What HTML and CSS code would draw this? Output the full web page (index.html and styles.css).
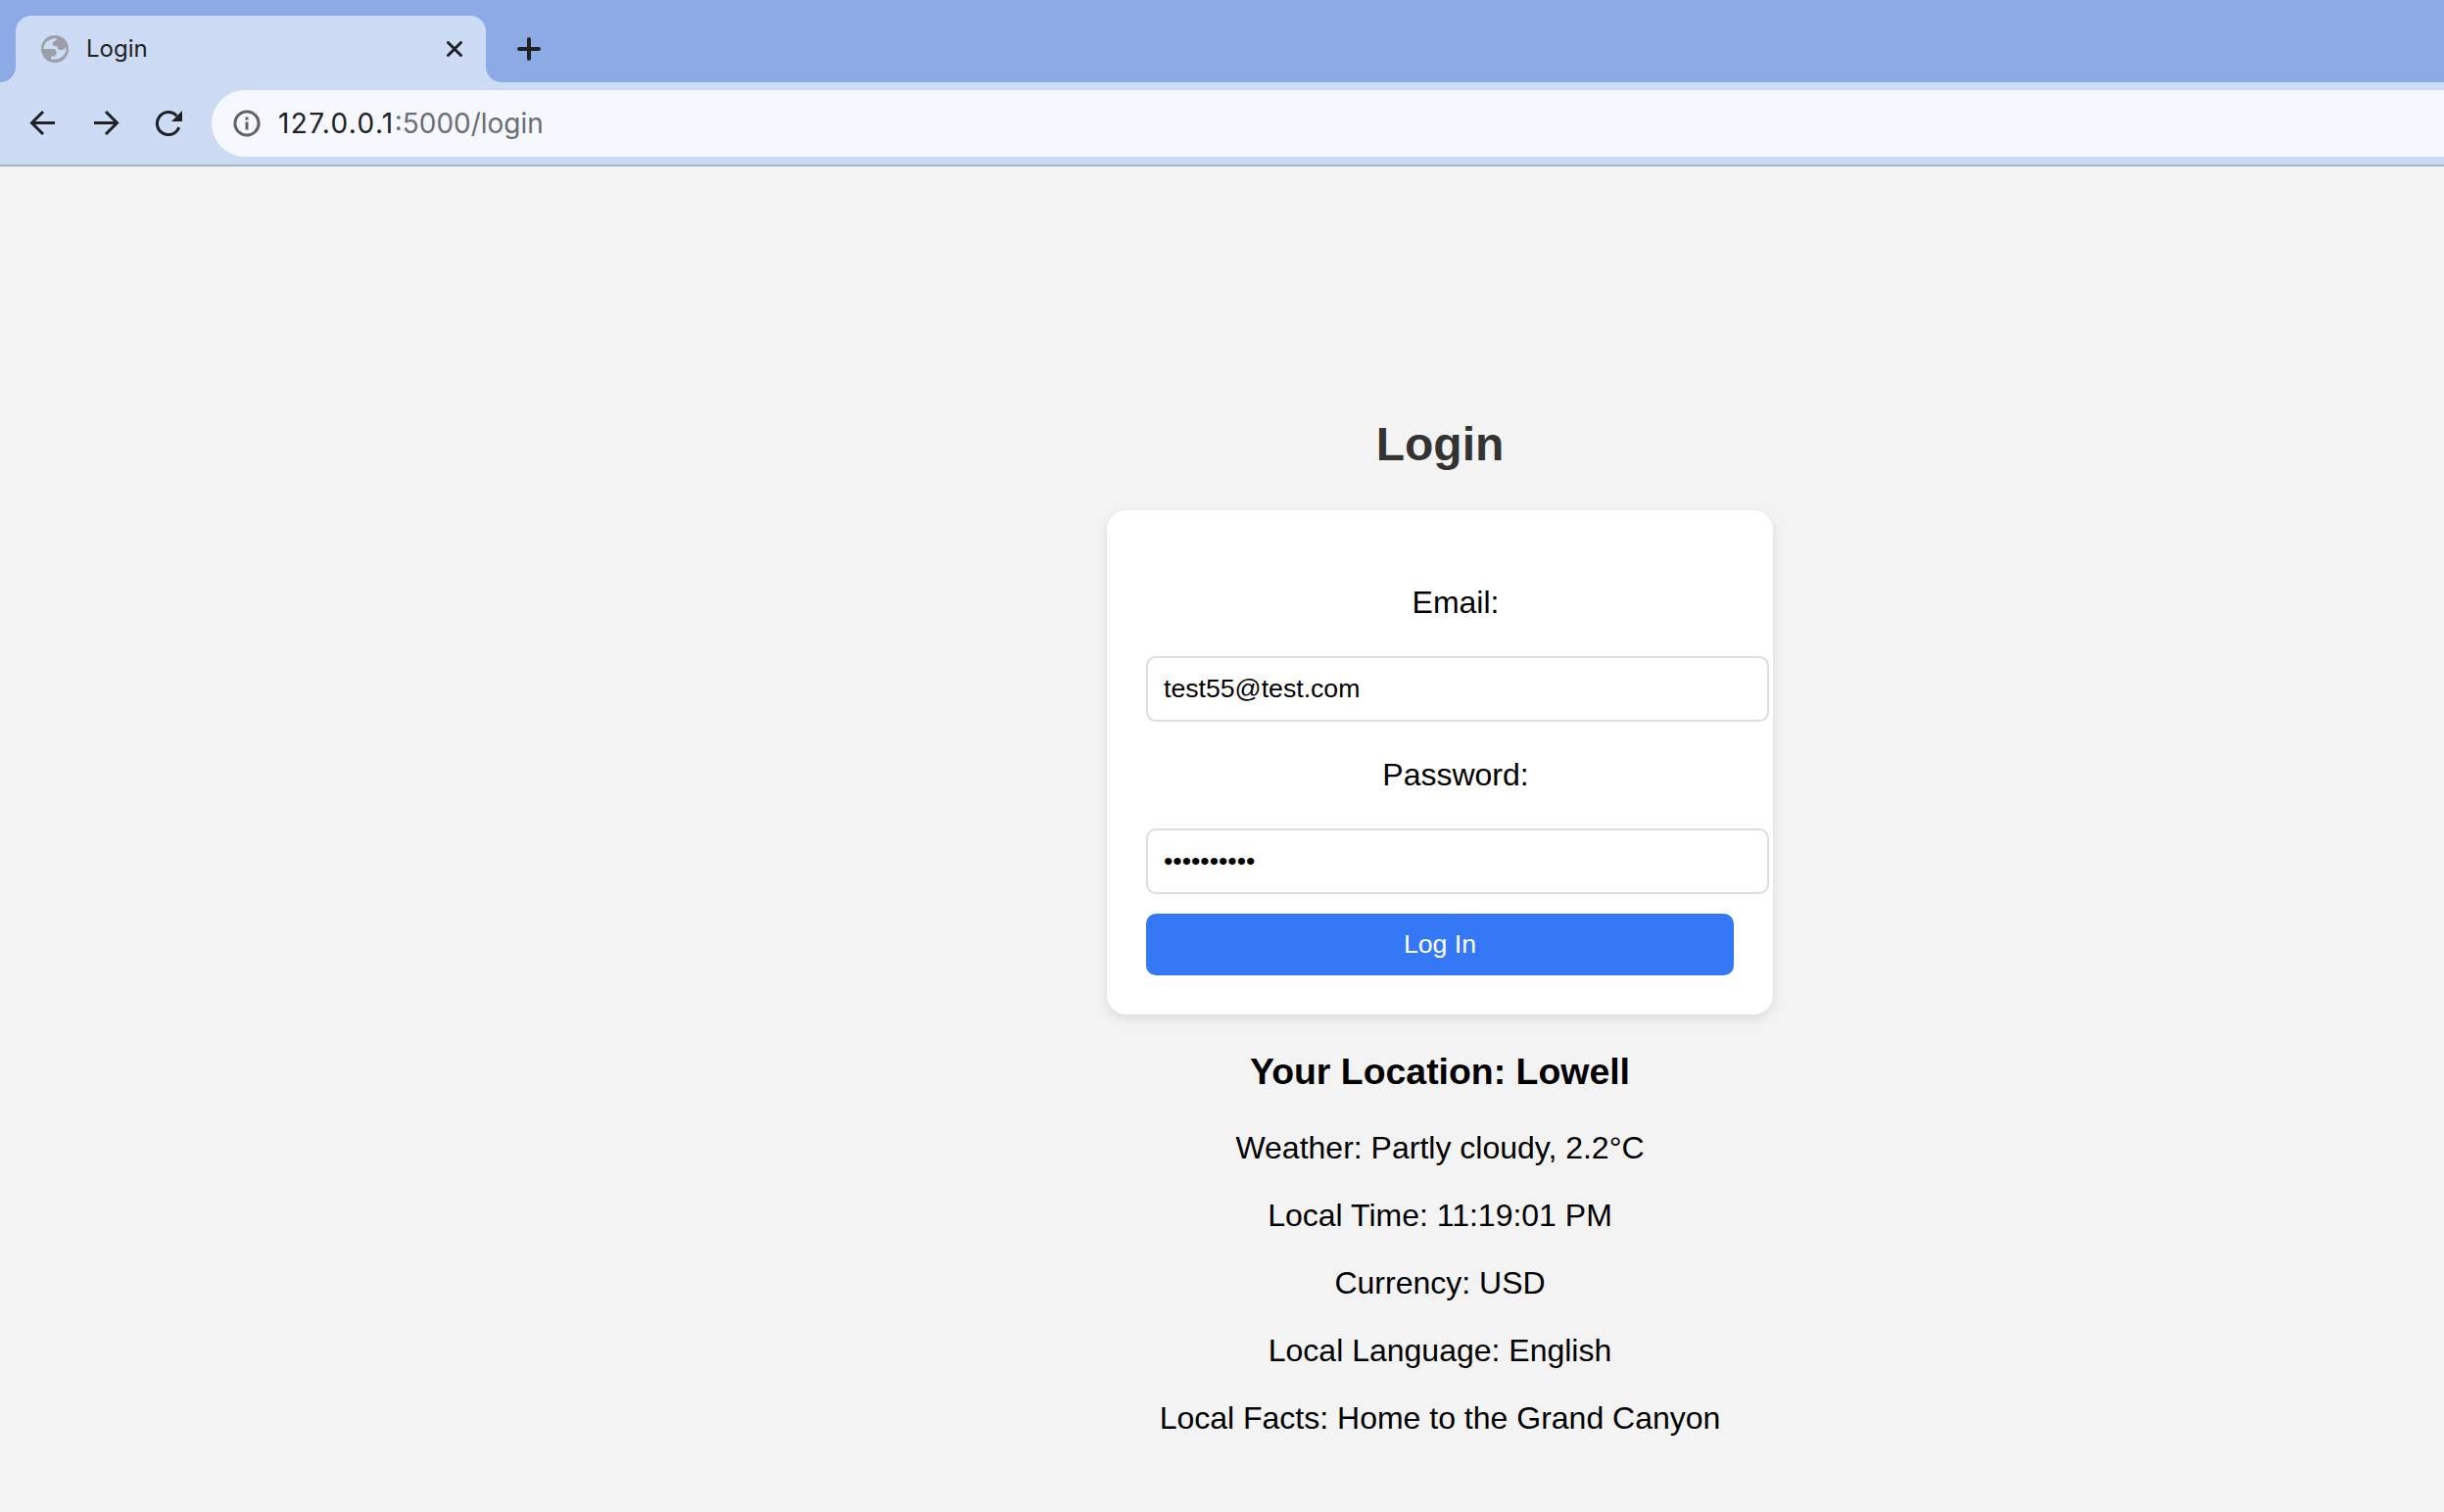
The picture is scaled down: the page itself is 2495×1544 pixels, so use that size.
FILE: index.html
```html
<!DOCTYPE html>
<html lang="en">
<head>
<meta charset="utf-8">
<title>Login</title>
<link rel="stylesheet" href="styles.css">
</head>
<body>
<div class="window">
  <header class="tabstrip">
    <div class="tab">
      <svg class="globe" viewBox="0 0 28 28"><circle cx="14" cy="14" r="14" fill="#9aa0a6"/><path d="M2.5 14C2.5 8 8 3 15.5 3V5L12.5 6.5C11.5 8 11.8 10 12.5 10.8L16.5 11.5C16.5 14 18 15 20 15C22.5 15.3 24 14 24.5 12L25.5 14C25.5 20 20 25.5 10 24.8V21.5H14C14.5 20 15.5 19.8 15.5 19V16.5C15.2 15 14 14 12 14Z" fill="#cedbf5"/></svg>
      <span class="tab-title">Login</span>
      <svg class="close" viewBox="0 0 16 16"><path d="M1.5 1.5 14.5 14.5M14.5 1.5 1.5 14.5"/></svg>
    </div>
    <svg class="plus" viewBox="0 0 24 24"><path d="M12 2V22M2 12H22"/></svg>
  </header>
  <nav class="toolbar">
    <svg class="nav-icon" viewBox="0 0 28 28"><path d="M26 13.5H3M14 2 2.5 13.5 14 25"/></svg>
    <svg class="nav-icon" viewBox="0 0 28 28"><path d="M2 13.5H25M14 2 25.5 13.5 14 25"/></svg>
    <svg class="nav-icon" viewBox="0 0 28 28"><path d="M24.7 18A11.5 11.5 0 1 1 22.3 6.2"/><path class="solid" d="M28 1V12H17Z"/></svg>
    <div class="omnibox">
      <svg class="info" viewBox="0 0 28 28"><circle cx="14" cy="14" r="12.1"/><path d="M14 12.5V20.5M14 7.5V10.5"/></svg>
      <span class="url"><span class="host">127.0.0.1</span>:5000/login</span>
    </div>
  </nav>
  <main class="page">
    <h1 class="heading">Login</h1>
    <form class="card">
      <label class="label" for="email">Email:</label>
      <input class="field" id="email" type="text" value="test55@test.com">
      <label class="label" for="password">Password:</label>
      <input class="field" id="password" type="password" value="abcdefghij">
      <button class="submit" type="button">Log In</button>
    </form>
    <h2 class="location">Your Location: Lowell</h2>
    <p class="fact">Weather: Partly cloudy, 2.2°C</p>
    <p class="fact">Local Time: 11:19:01 PM</p>
    <p class="fact">Currency: USD</p>
    <p class="fact">Local Language: English</p>
    <p class="fact">Local Facts: Home to the Grand Canyon</p>
  </main>
</div>
</body>
</html>
```
FILE: styles.css
```css
* { box-sizing: border-box; }
body {
  margin: 0;
  background: #f3f3f3;
  font-family: "Liberation Sans", Arial, sans-serif;
}
.window { height: 1544px; }
svg { display: block; flex: none; fill: none; stroke: #202124; stroke-width: 3; }

.tabstrip {
  display: flex;
  align-items: center;
  height: 84px;
  padding: 16px 0 0 16px;
  background: #8cabe5;
}
.tab {
  position: relative;
  display: flex;
  align-items: center;
  width: 480px;
  height: 68px;
  padding: 0 24px 0 26px;
  border-radius: 16px 16px 0 0;
  background: #cedbf5;
}
.tab::before,
.tab::after {
  content: "";
  position: absolute;
  bottom: 0;
  width: 16px;
  height: 16px;
}
.tab::before { left: -16px; background: radial-gradient(circle at 0 0, transparent 15.5px, #cedbf5 16.5px); }
.tab::after { right: -16px; background: radial-gradient(circle at 100% 0, transparent 15.5px, #cedbf5 16.5px); }
.globe { width: 28px; height: 28px; stroke: none; }
.tab-title {
  flex: 1;
  margin-left: 18px;
  font: 24px/30px Inter, sans-serif;
  color: #202124;
}
.close { width: 16px; height: 16px; stroke-linecap: round; }
.plus { width: 24px; height: 24px; margin-left: 32px; stroke-width: 4; stroke-linecap: round; }

.toolbar {
  display: flex;
  align-items: center;
  height: 86px;
  padding: 0 0 0 30px;
  gap: 36px;
  border-bottom: 2px solid #a6b1cc;
  background: #cedbf5;
}
.nav-icon { width: 28px; height: 28px; }
.nav-icon .solid { fill: #202124; stroke: none; }
.omnibox {
  display: flex;
  align-items: center;
  flex: 1;
  height: 68px;
  margin-left: -6px;
  padding-left: 22px;
  border-radius: 34px 0 0 34px;
  background: #f5f8fe;
}
.info { width: 28px; height: 28px; stroke: #5f6368; }
.url {
  margin-left: 18px;
  font: 28px/34px Inter, sans-serif;
  color: #6c6e72;
}
.host { color: #202124; letter-spacing: 1.35px; }

.page {
  display: flex;
  flex-direction: column;
  align-items: center;
  padding: 256px 0 0 445px;
}
.heading { margin: 0 0 40px; font-size: 48px; line-height: 55px; color: #333; }
.card {
  display: flex;
  flex-direction: column;
  width: 680px;
  height: 515px;
  padding: 40px;
  border-radius: 20px;
  background: #fff;
  box-shadow: 0 4px 12px rgba(0, 0, 0, .1);
}
.label {
  height: 109px;
  padding: 36px 0 0 32px;
  font-size: 32px;
  line-height: 37px;
  text-align: center;
}
.field {
  width: 636px;
  height: 67px;
  margin: 0;
  padding: 0 16px;
  border: 2px solid #ddd;
  border-radius: 10px;
  background: #fff;
  font: 26.667px "Liberation Sans", Arial, sans-serif;
  color: #000;
}
.submit {
  height: 63px;
  margin-top: 20px;
  padding: 0 0 1px;
  border: 0;
  border-radius: 10px;
  background: #3478f6;
  color: #fff;
  font: 26.667px "Liberation Sans", Arial, sans-serif;
}
.location { margin: 37px 0 38px; font-size: 37.44px; line-height: 43px; }
.fact { margin: 0 0 32px; font-size: 32px; line-height: 37px; }
```
